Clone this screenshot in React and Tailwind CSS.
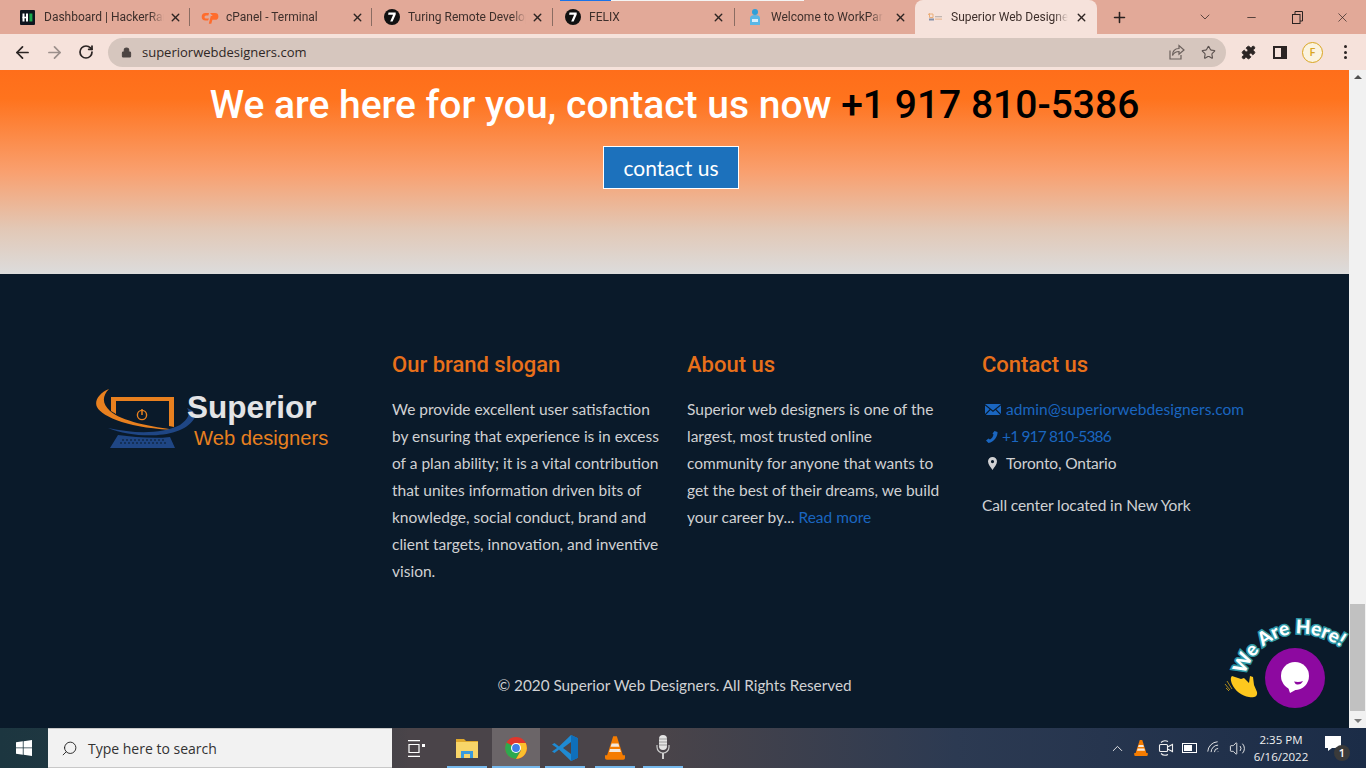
import React from "react";
import { ArrowLeft, ArrowRight, RotateCw, Lock, Star, Puzzle, X, Plus, ChevronDown, Minus, Search, ChevronUp, Volume2, Wifi } from "lucide-react";

const bodyFont = "font-['Lato','Noto_Sans',sans-serif]";

function HR() {
  return (
    <svg width="15" height="15" viewBox="0 0 15 15">
      <rect width="15" height="15" rx="1" fill="#0e141e" />
      <rect x="2.500" y="3.500" width="2" height="8" fill="#fff" />
      <rect x="6" y="3.500" width="2" height="8" fill="#fff" />
      <rect x="2.500" y="6.700" width="5" height="1.600" fill="#fff" />
      <rect x="9.400" y="3.500" width="3" height="8" fill="#1ba94c" />
    </svg>
  );
}
function CP() {
  return (
    <svg width="18" height="13" viewBox="0 0 18 13">
      <path d="M8 2H4.500a3.800 3.800 0 0 0 0 7.600H7L8 7.400H5a1.500 1.500 0 0 1 0-3h2.400z" fill="#ff6c2c" />
      <path d="M9 2h5a3.400 3.400 0 0 1 0 6.800H11.400L10.300 12.800H7.800l2-7.800h3.800a1 1 0 0 1 0 2" fill="#ff6c2c" />
    </svg>
  );
}
function T7({ size = 16 }) {
  return (
    <svg width={size} height={size} viewBox="0 0 16 16">
      <circle cx="8" cy="8" r="8" fill="#111" />
      <path d="M4.500 3.600h7.200v1.800L8.600 12.600H6.200l2.900-6.900H4.100z" fill="#fff" />
    </svg>
  );
}
function WP() {
  return (
    <svg width="14" height="18" viewBox="0 0 14 18">
      <circle cx="7" cy="4" r="3" fill="#2f9fd8" />
      <path d="M2 17V10c0-2 2-3 5-3s5 1 5 3v7z" fill="#59b7e6" />
      <rect x="4" y="11" width="6" height="3" fill="#d8eefa" />
    </svg>
  );
}
function SW() {
  return (
    <svg width="14" height="8" viewBox="0 0 14 8" className="opacity-80">
      <path d="M0 2q1-2 2-2M1.500 1h3.500v3.500H1.500z" fill="none" stroke="#e8a060" strokeWidth="1" />
      <rect x="1" y="5.500" width="5" height="2" fill="#6b7c9c" />
      <rect x="7" y="3" width="7" height="1.300" fill="#b5aba6" />
      <rect x="7" y="5.500" width="7" height="1.300" fill="#e8b48c" />
    </svg>
  );
}

function Tab({ icon, title, active, sep, bar, w, cx = "left-[161px]", tw = "w-[118px]" }) {
  return (
    <div className={`relative flex h-[34px] shrink-0 items-center ${w} ${active ? "rounded-t-lg bg-[#f6e2db]" : ""}`}>
      {bar && <div className="absolute left-[7px] top-0 flex h-[1px] w-[244px]"><div className="w-[51px] bg-[#1a73e8]" /><div className="flex-1 bg-[#f4f4f4]" /></div>}
      <div className="flex w-[36px] shrink-0 justify-center pl-[3px]">{icon}</div>
      <div
        className={`${tw} overflow-hidden whitespace-nowrap font-['Roboto',sans-serif] text-[12px] text-[#3e2f2b]`}
        style={{ maskImage: "linear-gradient(to right,#000 88%,transparent 100%)" }}
      >
        {title}
      </div>
      <X size={13} strokeWidth={2.600} className={`absolute ${cx} text-[#2d2422]`} />
      {sep && <div className="absolute right-0 top-[8px] h-[18px] w-[1px] bg-[#8a6c62]" />}
    </div>
  );
}

function Logo() {
  return (
    <svg width="234" height="62" viewBox="0 0 234 62" className="-ml-[1px] block">
      <path d="M13 0 C3 4 -2 12 1 18 C6 28 35 40 82 41 C55 38 25 32 14 22 C6 15 6 7 13 0Z" fill="#e8801f" />
      <path d="M15 8H78V38L73 37V12H20V25L15 22Z" fill="#e8801f" />
      <circle cx="46" cy="26" r="4.600" fill="none" stroke="#e8801f" strokeWidth="1.400" />
      <path d="M46 20V26" stroke="#e8801f" strokeWidth="1.500" />
      <path d="M12 39 C40 50 85 50 98 30 C101 26 99 22 91 19 C95 25 92 30 84 36 C65 45 40 45 12 39Z" fill="#1f4684" />
      <path d="M22 46 C38 48 58 50 74 48 L79 59 H14Z" fill="#1f4684" />
      <path d="M26 51H70M24 54H72" stroke="#0a1a2a" strokeWidth="1" strokeDasharray="2 2" />
      <text x="91" y="29" fontFamily="'Liberation Sans',sans-serif" fontWeight="700" fontSize="31.500" fill="#e3e4e6">Superior</text>
      <text x="98" y="56" fontFamily="'Liberation Sans',sans-serif" fontSize="20.200" fill="#e8801f">Web designers</text>
    </svg>
  );
}

function Chat() {
  return (
    <div className="absolute left-[1224px] top-[616px] h-[94px] w-[126px]">
      <svg width="126" height="94" viewBox="0 0 126 94" className="absolute left-0 top-0 overflow-visible">
        <defs>
          <path id="arc" d="M21 59 C30 26 75 -4 126 38" fill="none" />
        </defs>
        <text fontFamily="'Lato',sans-serif" fontWeight="900" fontSize="19" fill="#fff" stroke="#2e97a5" strokeWidth="3.200" paintOrder="stroke" letterSpacing="0.200">
          <textPath href="#arc">We Are Here!</textPath>
        </text>
        <path d="M8 60 L17 63 L20 62 L25 67 L26 60 L29 61 L30 69 L33 76 C34 81 29 82 25 81 C18 80 11 75 8 68 C7 65 6 62 8 60Z" fill="#fdc81e" />
        <path d="M1 68l5 6M3 65l5 8M2 72l3 3" stroke="#d8a818" strokeWidth="0.800" fill="none" />
      </svg>
      <div className="absolute left-[41px] top-[32px] h-[60px] w-[60px] rounded-full bg-[#8d09a0]">
        <svg width="60" height="60" viewBox="0 0 60 60">
          <circle cx="30" cy="28" r="14" fill="#fff" />
          <path d="M22 36 L25 45 L34 40Z" fill="#fff" />
          <path d="M29 33.500 Q34 34.500 38 33 Q36 37 32 36.500 Q30 36 29 33.500Z" fill="#8d09a0" />
        </svg>
      </div>
    </div>
  );
}

function WinLogo() {
  return (
    <svg width="16" height="16" viewBox="0 0 16 16" fill="#fff">
      <path d="M0 2.300 6.800 1.300V7.500H0zM7.600 1.200 16 0V7.500H7.600zM0 8.300H6.800V14.700L0 13.700zM7.600 8.300H16V16L7.600 14.800z" />
    </svg>
  );
}
function Chrome() {
  return (
    <svg width="22" height="22" viewBox="0 0 22 22">
      <circle cx="11" cy="11" r="11" fill="#e0362c" />
      <path d="M11 11 1.500 5.500A11 11 0 0 0 11 22l5-9z" fill="#2da94f" />
      <path d="M11 6h9.700A11 11 0 0 1 11 22l5-8.500z" fill="#fbc02d" />
      <circle cx="11" cy="11" r="5" fill="#fff" />
      <circle cx="11" cy="11" r="3.900" fill="#3f7fe8" />
    </svg>
  );
}
function Cone({ w = 20, h = 24 }) {
  return (
    <svg width={w} height={h} viewBox="0 0 22 26">
      <path d="M9 0h4l7 22H2z" fill="#f57c00" />
      <path d="M7.300 8h7.400l1 3.500H6.200zM5.500 14h11l1 3.500H4.500z" fill="#f3e8dc" />
      <path d="M0 21h22v3a2 2 0 0 1-2 2H2a2 2 0 0 1-2-2z" fill="#f57c00" />
    </svg>
  );
}
function Folder() {
  return (
    <svg width="22" height="20" viewBox="0 0 22 20">
      <path d="M0 1h8l2 2h12v4H0z" fill="#e0a92c" />
      <rect y="4" width="22" height="16" fill="#f8d568" />
      <path d="M5 20v-7h12v7h-3v-4H8v4z" fill="#3a9bdc" />
    </svg>
  );
}
function VS() {
  return (
    <svg width="26" height="26" viewBox="0 0 26 26">
      <path d="M19 0 26 3.200V22.800L19 26 7 14.500 2.500 18 0 16.500 5 13 0 9.500 2.500 8 7 11.500z" fill="#1f8ad2" />
      <path d="M19 7 11 13l8 6z" fill="#4a4449" />
      <path d="M19 0 26 3.200V22.800L19 26z" fill="#0f6fbb" />
    </svg>
  );
}
function Mic() {
  return (
    <svg width="14" height="26" viewBox="0 0 14 26">
      <rect x="3" y="0" width="8" height="15" rx="4" fill="#e4e4e4" />
      <path d="M3 4h8M3 7h8M3 10h8" stroke="#888" strokeWidth="0.800" />
      <path d="M1 10v2a6 6 0 0 0 12 0v-2" fill="none" stroke="#c9c9c9" strokeWidth="1.200" />
      <path d="M7 18v6" stroke="#ddd" strokeWidth="1.800" />
    </svg>
  );
}

function TaskIcon({ children, w = "w-[40px]", active }) {
  return (
    <div className={`relative flex h-[40px] shrink-0 items-center justify-center ${w} ${active ? "bg-[#6b6568]" : ""}`}>
      {children}
      <div className="absolute bottom-0 left-0 right-0 h-[2px] bg-[#76b9ed]" />
    </div>
  );
}

export default function App() {
  return (
    <div className="relative flex h-[768px] w-[1366px] flex-col overflow-hidden bg-[#0a1a2a]">
      {/* tab strip */}
      <div className="flex h-[34px] shrink-0 items-center bg-[#e2a998] pl-[8px]">
        <Tab icon={<HR />} title="Dashboard | HackerRank" sep w="w-[182px]" tw="w-[120px]" />
        <Tab icon={<CP />} title="cPanel - Terminal" sep w="w-[182px]" />
        <Tab icon={<T7 />} title="Turing Remote Developer" sep w="w-[181px]" cx="left-[159px]" />
        <Tab icon={<T7 />} title="FELIX" sep bar w="w-[182px]" cx="left-[159px]" />
        <Tab icon={<WP />} title="Welcome to WorkPark" w="w-[180px]" cx="left-[159px]" tw="w-[112px]" />
        <Tab icon={<SW />} title="Superior Web Designers" active w="w-[182px]" cx="left-[160px]" tw="w-[117px]" />
        <Plus size={17} strokeWidth={2.200} className="ml-[14px] text-[#2a2220]" />
        <ChevronDown size={16} strokeWidth={1.200} className="ml-[69px] text-[#3a2d2a]" />
        <Minus size={13} strokeWidth={1.400} className="ml-[32px] text-[#2a2220]" />
        <svg width="11" height="13" viewBox="0 0 11 13" fill="none" stroke="#2a2220" strokeWidth="1" className="ml-[34px]">
          <rect x="0.500" y="3.500" width="7.500" height="9" />
          <path d="M3 3V.500h7.500V10H8" />
        </svg>
        <X size={15} strokeWidth={1.100} className="ml-[32px] text-[#2a2220]" />
      </div>

      {/* toolbar */}
      <div className="flex h-[36px] shrink-0 items-center bg-[#f6e2db] pl-[13px]">
        <ArrowLeft size={19} strokeWidth={2.200} className="text-[#2b2423]" />
        <ArrowRight size={19} strokeWidth={2.200} className="ml-[13px] text-[#9b8f8b]" />
        <RotateCw size={16} strokeWidth={2.600} className="ml-[14px] text-[#2b2423]" />
        <div className="ml-[14px] flex h-[29px] w-[1118px] items-center rounded-full bg-[#d6c6be] pl-[13px] pr-[10px]">
          <Lock size={11} fill="#4c4442" strokeWidth={2.200} className="text-[#4c4442]" />
          <span className="ml-[10px] pt-[1px] font-['Open_Sans',sans-serif] text-[13px] text-[#2f2725]">superiorwebdesigners.com</span>
          <svg width="16" height="16" viewBox="0 0 16 16" fill="none" stroke="#6b605c" strokeWidth="1.200" className="ml-auto">
            <path d="M1 6.500V15h11v-4" />
            <path d="M3.500 11.500C3.500 6.500 6.500 4.500 10 4.500V1.500l5 4.500-5 4.300V7.500C7 7.500 5 8.500 3.500 11.500z" />
          </svg>
          <Star size={15} strokeWidth={1.800} className="ml-[16px] text-[#5b514e]" />
        </div>
        <Puzzle size={15} fill="#2b2423" strokeWidth={1.500} className="ml-[15px] text-[#2b2423]" />
        <div className="ml-[17px] h-[13px] w-[14px] border-2 border-r-[6px] border-[#2b2423]" />
        <div className="ml-[15px] flex h-[21px] w-[21px] items-center justify-center rounded-full border border-[#d9a520] bg-[#fbf3df] font-['Open_Sans',sans-serif] text-[11px] font-semibold text-[#d9a520]">F</div>
        <div className="ml-[21px] flex flex-col gap-[2.500px]">
          <div className="h-[3px] w-[3px] rounded-full bg-[#2b2423]" />
          <div className="h-[3px] w-[3px] rounded-full bg-[#2b2423]" />
          <div className="h-[3px] w-[3px] rounded-full bg-[#2b2423]" />
        </div>
      </div>

      {/* viewport */}
      <div className="flex h-[658px] shrink-0">
        <div className="flex w-[1349px] shrink-0 flex-col">
          <section className="flex h-[204px] shrink-0 flex-col items-center bg-[linear-gradient(to_bottom,#ff6e1a_0%,#ff731d_14%,#f9a06f_50%,#e2c8b6_78%,#dcdcdc_100%)] pt-[12px]">
            <h2 className="whitespace-nowrap font-['Roboto',sans-serif] text-[39px] font-medium leading-[46px] text-white">
              We are here for you, contact us now <span className="text-black">+1 917 810-5386</span>
            </h2>
            <button className={`mr-[7px] mt-[18px] h-[43px] w-[136px] border border-white bg-[#1c71bc] text-[21px] text-white ${bodyFont}`}>contact us</button>
          </section>

          <footer className={`flex flex-1 flex-col bg-[#0a1a2a] text-[15.500px] leading-[27px] text-[#d0d1d3] ${bodyFont}`}>
            <div className="flex pl-[97px] pt-[77px]">
              <div className="w-[295px] shrink-0 pt-[38px]"><Logo /></div>
              <div className="w-[295px] shrink-0">
                <h3 className="font-['Roboto',sans-serif] text-[22px] font-medium leading-[28px] text-[#e8701a]">Our brand slogan</h3>
                <p className="mt-[17px] whitespace-nowrap">
                  We provide excellent user satisfaction<br />by ensuring that experience is in excess<br />of a plan ability; it is a vital contribution<br />that unites information driven bits of<br />knowledge, social conduct, brand and<br />client targets, innovation, and inventive<br />vision.
                </p>
              </div>
              <div className="w-[295px] shrink-0">
                <h3 className="font-['Roboto',sans-serif] text-[22px] font-medium leading-[28px] text-[#e8701a]">About us</h3>
                <p className="mt-[17px] whitespace-nowrap">
                  Superior web designers is one of the<br />largest, most trusted online<br />community for anyone that wants to<br />get the best of their dreams, we build<br />your career by... <span className="text-[#1a66c0]">Read more</span>
                </p>
              </div>
              <div className="w-[295px] shrink-0">
                <h3 className="font-['Roboto',sans-serif] text-[22px] font-medium leading-[28px] text-[#e8701a]">Contact us</h3>
                <div className="mt-[17px] whitespace-nowrap">
                  <div className="flex items-center pl-[3px] text-[#1a66c0]">
                    <svg width="16" height="11" viewBox="0 0 16 11">
                      <path d="M0 0H16L8 6.500zM0 1.500 4.700 5.300 0 10zM16 1.500 11.300 5.300 16 10zM.8 11 5.500 6 8 8l2.500-2 4.700 5z" fill="#1a66c0" />
                    </svg>
                    <span className="ml-[5px] tracking-[0.06px]">admin@superiorwebdesigners.com</span>
                  </div>
                  <div className="flex items-center pl-[4px] text-[#1a66c0]">
                    <svg width="12" height="12" viewBox="0 0 12 12">
                      <path d="M8.500 0 11.500 1C12 5 8 11 2.500 12L0 9.500 2.500 7.500 4 8.500C6 7.500 7 5.500 7.500 3.500L6.500 2.500z" fill="#1a66c0" />
                    </svg>
                    <span className="ml-[4px] tracking-[-0.85px]">+1 917 810-5386</span>
                  </div>
                  <div className="flex items-center pl-[6px]">
                    <svg width="9" height="13" viewBox="0 0 9 13">
                      <path fillRule="evenodd" d="M4.500 0A4.500 4.500 0 0 1 9 4.500C9 7.500 6 10.500 4.500 13 3 10.500 0 7.500 0 4.500A4.500 4.500 0 0 1 4.500 0zM4.500 3a1.600 1.600 0 1 0 0 3.200 1.600 1.600 0 0 0 0-3.200z" fill="#d0d1d3" />
                    </svg>
                    <span className="ml-[9px] tracking-[-0.15px]">Toronto, Ontario</span>
                  </div>
                  <div className="mt-[15px] tracking-[-0.1px]">Call center located in New York</div>
                </div>
              </div>
            </div>
            <div className="mt-auto pb-[29px] text-center text-[15.300px]">© 2020 Superior Web Designers. All Rights Reserved</div>
          </footer>
        </div>
        <div className="relative w-[17px] shrink-0 bg-[#f1f1f1]">
          <div className="absolute left-[5px] top-[5px] h-0 w-0 border-x-[4px] border-b-[4px] border-x-transparent border-b-[#505050]" />
          <div className="absolute left-[1px] top-[534px] h-[107px] w-[15px] bg-[#c1c1c1]" />
          <div className="absolute bottom-[5px] left-[5px] h-0 w-0 border-x-[4px] border-t-[4px] border-x-transparent border-t-[#7a7a7a]" />
        </div>
      </div>

      {/* taskbar */}
      <div className="flex h-[40px] shrink-0 items-center bg-[linear-gradient(to_right,#1c3640_0%,#2a3a42_20%,#4a4449_30%,#4a4449_48%,#2c3a52_70%,#1b2c47_100%)]">
        <div className="flex w-[48px] shrink-0 justify-center"><WinLogo /></div>
        <div className="flex h-[40px] w-[344px] shrink-0 items-center border-y border-[#c8c8c8] bg-[#f2f2f2] pl-[13px]">
          <Search size={17} strokeWidth={1.300} className="-scale-x-100 text-[#222]" />
          <span className="ml-[10px] font-['Open_Sans',sans-serif] text-[14px] text-[#333]">Type here to search</span>
        </div>
        <div className="flex w-[48px] shrink-0 justify-center">
          <svg width="17" height="17" viewBox="0 0 17 17" fill="none" stroke="#fff" strokeWidth="1.200">
            <path d="M0 .600h12M0 16.400h12M1 4.500h10v8H1z" /><rect x="14" y="4" width="3" height="3" fill="#fff" stroke="none" />
          </svg>
        </div>
        <div className="ml-[7px] flex gap-[5px]">
          <TaskIcon><Folder /></TaskIcon>
          <TaskIcon w="w-[48px]" active><Chrome /></TaskIcon>
          <TaskIcon><VS /></TaskIcon>
        </div>
        <div className="ml-[10px]"><TaskIcon><Cone /></TaskIcon></div>
        <div className="ml-[8px]"><TaskIcon><Mic /></TaskIcon></div>
        <div className="ml-auto flex items-center text-[#f0f0f0]">
          <ChevronUp size={17} strokeWidth={1.300} />
          <div className="ml-[8px]"><Cone w={14} h={16} /></div>
          <svg width="16" height="18" viewBox="0 0 16 18" fill="none" stroke="#f0f0f0" strokeWidth="1.100" className="ml-[10px]">
            <path d="M3 3.500Q6 .500 10 2.500M3 14.500Q6 17.500 10 15.500" />
            <rect x="1.500" y="5.500" width="8" height="7" rx="1" />
            <path d="M9.500 8 14.500 5.500v7L9.500 10" />
          </svg>
          <div className="ml-[8px] flex h-[10px] w-[15px] items-center border border-white p-[1px]"><div className="h-full w-[8px] bg-white" /></div>
          <Wifi size={16} strokeWidth={1.300} className="ml-[9px] -rotate-45" />
          <Volume2 size={17} strokeWidth={1.300} className="ml-[7px]" />
          <div className="ml-[7px] w-[56px] text-center font-['Open_Sans',sans-serif] text-[11.500px] leading-[17px]">2:35 PM<br />6/16/2022</div>
          <div className="relative ml-[14px] mr-[17px] h-[26px] w-[26px]">
            <div className="absolute left-[2px] top-[1px] h-[12px] w-[16px] bg-white" />
            <div className="absolute left-[5px] top-[13px] h-0 w-0 border-r-[4px] border-t-[3px] border-r-transparent border-t-white" />
            <div className="absolute bottom-[0px] right-[-1px] flex h-[16px] w-[16px] items-center justify-center rounded-full bg-[#3a3a3a] font-['Open_Sans',sans-serif] text-[11px] font-semibold text-white">1</div>
          </div>
        </div>
      </div>

      <Chat />
    </div>
  );
}
